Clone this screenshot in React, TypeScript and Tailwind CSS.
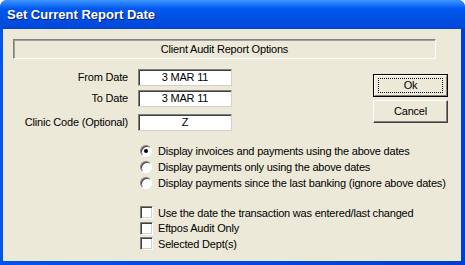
export default function App() {
  const font = { fontFamily: '"Liberation Sans", Arial, sans-serif' }

  return (
    <div
      className="w-[465px] h-[265px] flex flex-col overflow-hidden rounded-t-[7px] bg-[#0055ea] text-[11px] tracking-[-0.2px] text-black whitespace-nowrap"
      style={font}
    >
      {/* Title bar */}
      <div className="h-[29px] shrink-0 flex items-center pl-[7px] bg-gradient-to-b from-[#3d95ff] via-[#0058ee] via-30% to-[#0046d8]">
        <span className="text-white font-bold text-[13px] tracking-[0px] [text-shadow:1px_1px_0_#0a1e6e]">
          Set Current Report Date
        </span>
      </div>

      {/* Window body */}
      <div className="flex-1 flex pl-[3px] pr-[4px] pb-[4px] bg-gradient-to-r from-[#0055ea] to-[#0040d0]">
        <div className="flex-1 flex flex-col bg-[#ece9d8] px-[10px] pt-[10px]">
          {/* Header panel */}
          <div className="w-[423px] h-[20px] flex items-center justify-center border-t border-l border-t-[#808080] border-l-[#808080] border-b border-r border-b-white border-r-white shadow-[inset_1px_1px_0_#a0a0a0]">
            Client Audit Report Options
          </div>

          <div className="flex">
            {/* Date fields */}
            <div className="mt-[10px] grid grid-cols-[115px_94px] gap-x-[10px] items-center">
              <div className="text-right">From Date</div>
              <Field value="3 MAR 11" />
              <div className="text-right mt-[4px]">To Date</div>
              <div className="mt-[4px]">
                <Field value="3 MAR 11" />
              </div>
              <div className="text-right mt-[7px]">Clinic Code (Optional)</div>
              <div className="mt-[7px]">
                <Field value="Z" />
              </div>
            </div>

            {/* Buttons */}
            <div className="ml-[141px] mt-[15px] flex flex-col gap-[3px]">
              <button className="w-[75px] h-[23px] border border-black bg-[#ece9d8] p-0">
                <div className="h-full w-full flex items-center justify-center border-t border-l border-t-white border-l-white border-b border-r border-b-[#808080] border-r-[#808080]">
                  <span className="w-[65px] h-[15px] flex items-center justify-center border border-dotted border-black">
                    Ok
                  </span>
                </div>
              </button>
              <button className="w-[75px] h-[23px] flex items-center justify-center bg-[#ece9d8] border-t border-l border-t-white border-l-white border-b border-r border-b-[#404040] border-r-[#404040] shadow-[inset_-1px_-1px_0_#808080]">
                Cancel
              </button>
            </div>
          </div>

          {/* Radio options */}
          <div className="ml-[127px] mt-[12px] flex flex-col">
            <Radio checked label="Display invoices and payments using the above dates" />
            <Radio label="Display payments only using the above dates" />
            <Radio label="Display payments since the last banking (ignore above dates)" />
          </div>

          {/* Checkbox options */}
          <div className="ml-[127px] mt-[14px] flex flex-col">
            <Check label="Use the date the transaction was entered/last changed" />
            <Check label="Eftpos Audit Only" />
            <Check label="Selected Dept(s)" />
          </div>
        </div>
      </div>
    </div>
  )
}

function Field({ value }: { value: string }) {
  return (
    <div className="w-[94px] h-[17px] flex items-center justify-center bg-white border-t border-l border-t-[#808080] border-l-[#808080] border-b border-r border-b-[#d4d0c8] border-r-[#d4d0c8] shadow-[inset_1px_1px_0_#404040]">
      {value}
    </div>
  )
}

function Radio({ label, checked }: { label: string; checked?: boolean }) {
  return (
    <div className="h-[16px] flex items-center">
      <div className="w-[12px] h-[12px] shrink-0 rounded-full flex items-center justify-center bg-white border border-t-[#808080] border-l-[#808080] border-b-white border-r-white shadow-[inset_1px_1px_0_#404040]">
        {checked && <div className="w-[4px] h-[4px] rounded-full bg-black" />}
      </div>
      <span className="ml-[6px]">{label}</span>
    </div>
  )
}

function Check({ label }: { label: string }) {
  return (
    <div className="h-[15.5px] flex items-center">
      <div className="w-[13px] h-[13px] shrink-0 bg-white border border-t-[#808080] border-l-[#808080] border-b-white border-r-white shadow-[inset_1px_1px_0_#404040,inset_-1px_-1px_0_#d4d0c8]" />
      <span className="ml-[5px]">{label}</span>
    </div>
  )
}
